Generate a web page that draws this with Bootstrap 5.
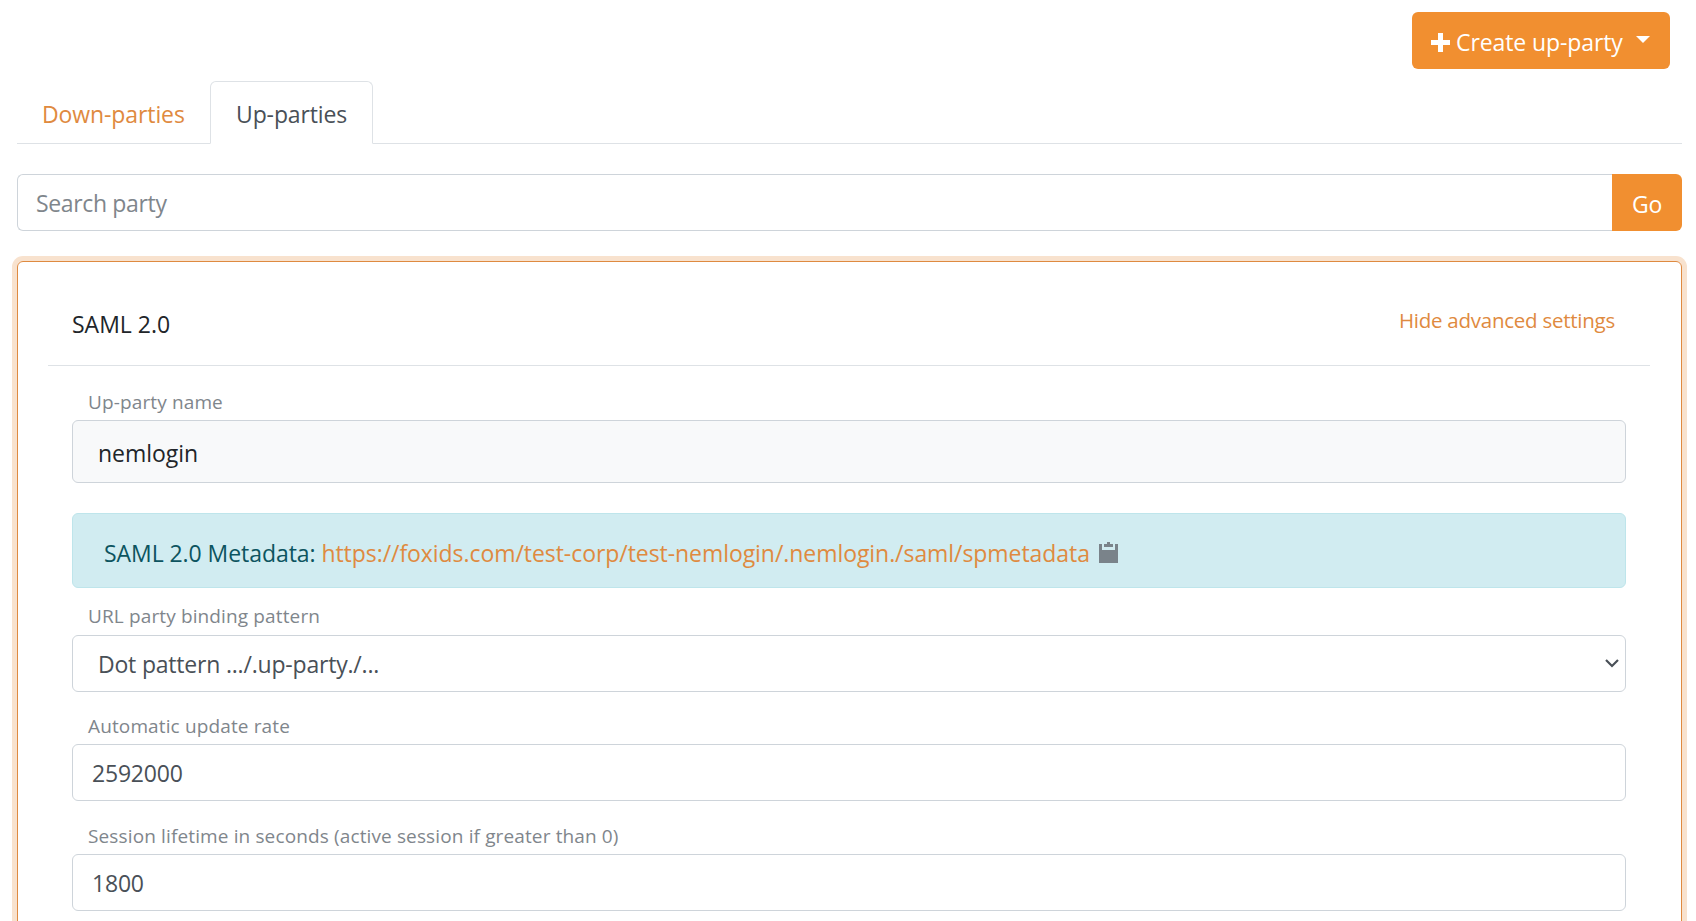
<!DOCTYPE html>
<html lang="en">
<head>
<meta charset="utf-8">
<meta name="viewport" content="width=device-width, initial-scale=1">
<title>FoxIDs - Up-parties</title>
<link href="https://cdn.jsdelivr.net/npm/bootstrap@5.3.0/dist/css/bootstrap.min.css" rel="stylesheet">
<style>
  html { font-size: 24px; overflow: hidden; }
  body { font-family: "Open Sans", "Noto Sans", sans-serif; font-size: 23px; line-height: 36px; color: #212529; background: #fff; height: 921px; overflow: hidden; }
  a { color: #df8a40; text-decoration: none; }
  .page { padding: 12px 14px 0 17px; }
  .btn-fox { background: #f18f30; color: #fff; border: 0; border-radius: 6px; height: 57px; font-size: 23px; line-height: 36px; }
  .btn-fox:hover { background: #df8a40; color: #fff; }
  .btn-create { width: 258px; margin-right: 12px; padding: 3px 19px 0; }
  .btn-create .caption { margin-left: 6px; letter-spacing: -.1px; }
  .caret { width: 0; height: 0; border: 7px solid transparent; border-top-color: #fff; border-bottom: 0; margin: -5px 0 0 13px; }
  .nav-tabs { height: 63px; margin-top: 12px; border-bottom: 1px solid #dee2e6; }
  .nav-tabs .nav-link { height: 63px; margin-bottom: -1px; padding: 14px 25px; border-width: 1px; border-radius: 6px 6px 0 0; color: #df8a40; white-space: nowrap; }
  .nav-tabs .nav-link.active { color: #495057; width: 163px; letter-spacing: -.12px; }
  .nav-tabs .first-tab { width: 193px; padding-left: 24px; letter-spacing: -.1px; }
  .form-control, .form-select { height: 57px; font-size: 23px; line-height: 36px; color: #495057; border: 1px solid #ced4da; border-radius: 6px; padding: 10px 19px 9px; letter-spacing: -.2px; }
  .form-control::placeholder { color: #7f868c; opacity: 1; }
  .search { margin-top: 30px; }
  .search .form-control { border-right: 0; padding: 10px 18px 9px; letter-spacing: -.35px; }
  .search .btn-fox { width: 70px; padding: 2px 0 0; border-radius: 0 6px 6px 0; letter-spacing: -.4px; }
  .party-card { margin-top: 30px; height: 700px; border: 1px solid #df8a40; border-radius: 6px; box-shadow: 0 0 0 5px #f8e2ce; padding: 0 31px 0 30px; }
  .party-head { height: 104px; border-bottom: 1px solid #dee2e6; padding: 44px 35px 0 24px; }
  .party-head a { font-size: 20.5px; letter-spacing: -.25px; margin-top: -4px; }
  .party-body { padding: 0 24px; }
  .field-label { display: block; font-size: 19px; line-height: 28px; height: 32px; letter-spacing: .13px; color: #7f868c; margin: 22px 0 0; padding: 0 16px; }
  .plain { height: 63px; background: #f8f9fa; color: #212529; padding: 14px 25px; letter-spacing: -.05px; }
  .alert-meta { height: 75px; margin: 30px 0 -8px; background: #d1ecf1; border: 1px solid #bee5eb; border-radius: 6px; color: #0c5460; padding: 4px 31px 0; letter-spacing: -.06px; }
  .alert-meta svg { margin: -1px 0 0 9px; }
  .form-select { padding: 10px 25px 9px; background-image: none; letter-spacing: -.2px; }
  .select-box { margin: 1px 0 20px; }
  .select-box + .field-label { margin-top: 20px; }
  .rate-input { margin-bottom: 21px; }
  .rate-input + .field-label { margin-top: 21px; }
  .select-box > svg { right: 7px; top: 24px; }
</style>
</head>
<body>
<main class="page">
  <div class="d-flex justify-content-end">
    <button class="btn btn-fox btn-create d-flex align-items-center" type="button">
      <svg class="flex-shrink-0" width="19" height="19" viewBox="0 0 19 19" fill="#fff"><path d="M7 0h5v7h7v5h-7v7H7v-7H0V7h7z"/></svg>
      <span class="caption text-nowrap">Create up-party</span><span class="caret"></span>
    </button>
  </div>
  <ul class="nav nav-tabs flex-nowrap">
    <li class="nav-item"><a class="nav-link first-tab" href="#">Down-parties</a></li>
    <li class="nav-item"><a class="nav-link active" href="#">Up-parties</a></li>
  </ul>
  <div class="search input-group flex-nowrap">
    <input class="form-control" type="text" placeholder="Search party">
    <button class="btn btn-fox" type="button">Go</button>
  </div>
  <section class="party-card">
    <div class="party-head d-flex justify-content-between align-items-start">
      <span>SAML 2.0</span>
      <a href="#">Hide advanced settings</a>
    </div>
    <div class="party-body">
      <label class="field-label">Up-party name</label>
      <div class="form-control plain">nemlogin</div>
      <div class="alert-meta d-flex align-items-center">
        <span>SAML 2.0 Metadata:</span>&nbsp;<a href="#">https://foxids.com/test-corp/test-nemlogin/.nemlogin./saml/spmetadata</a>
        <svg width="19" height="21" viewBox="0 0 19 21" fill="#7a838a"><path d="M0 2h3v6h13V2h3v19H0z"/><path d="M8 0h3v2h3v3H5V2h3z"/></svg>
      </div>
      <label class="field-label">URL party binding pattern</label>
      <div class="select-box position-relative">
        <div class="form-select">Dot pattern .../.up-party./...</div>
        <svg class="position-absolute" width="14" height="9" viewBox="0 0 14 9" fill="none" stroke="#495057" stroke-width="2.2"><path d="M1 1l6 6 6-6"/></svg>
      </div>
      <label class="field-label" for="rate">Automatic update rate</label>
      <input class="form-control rate-input" id="rate" type="text" value="2592000">
      <label class="field-label" for="lifetime">Session lifetime in seconds (active session if greater than 0)</label>
      <input class="form-control" id="lifetime" type="text" value="1800">
    </div>
  </section>
</main>
<script src="https://cdn.jsdelivr.net/npm/bootstrap@5.3.0/dist/js/bootstrap.bundle.min.js"></script>
</body>
</html>
